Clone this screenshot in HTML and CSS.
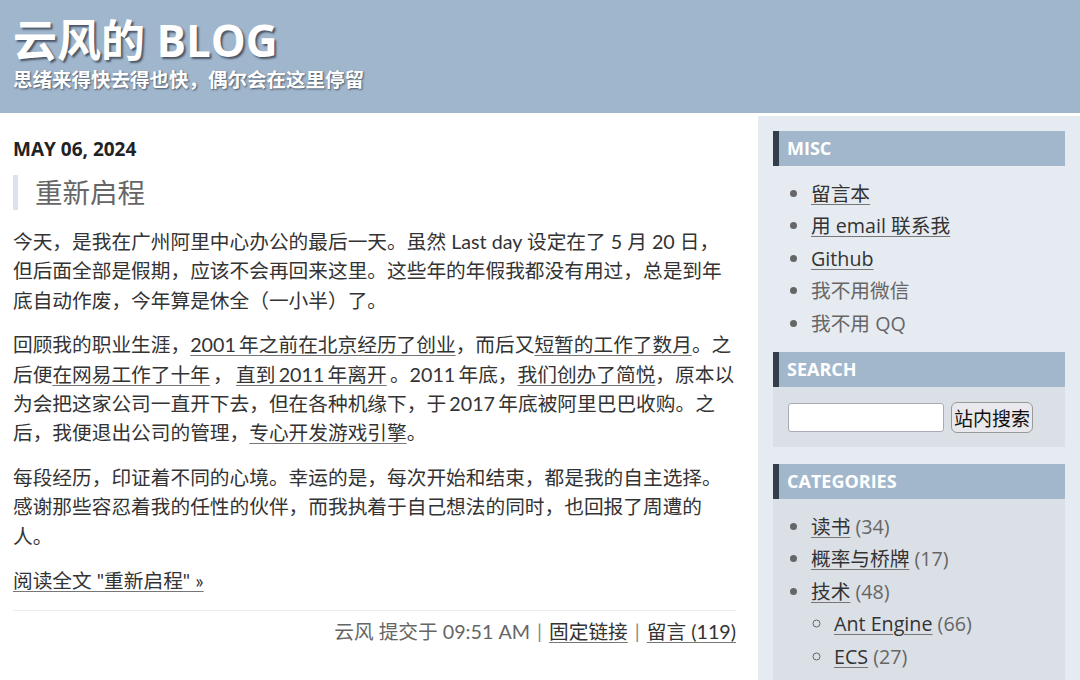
FILE: index.html
```html
<!DOCTYPE html>
<html>
  <head>
    <meta charset="UTF-8">
    <title>云风的 BLOG</title>
    <link rel="stylesheet" href="styles.css">
  </head>
  <body>
    <header class="site-header">
      <h1 class="site-title">云风的 BLOG</h1>
      <p class="site-tagline">思绪来得快去得也快，偶尔会在这里停留</p>
    </header>
    <div class="layout">
      <main class="content">
        <h2 class="date-header">May 06, 2024</h2>
        <h3 class="entry-title">重新启程</h3>
        <div class="entry-body">
          <p>今天，是我在广州阿里中心办公的最后一天。虽然 Last day 设定在了 5 月 20 日，但后面全部是假期，应该不会再回来这里。这些年的年假我都没有用过，总是到年底自动作废，今年算是休全（一小半）了。</p>
          <p class="tight">回顾我的职业生涯，<a href="#">2001 年之前在北京经历了创业</a>，而后又<a href="#">短暂的工作了数月</a>。之后便<a href="#">在网易工作了十年</a> ， <a href="#">直到 2011 年离开</a> 。2011 年底，<a href="#">我们创办了简悦</a>，原本以为会把这家公司一直开下去，但在各种机缘下，于 2017 年底被阿里巴巴收购。之后，我便退出公司的管理，<a href="#">专心开发游戏引擎</a>。</p>
          <p>每段经历，印证着不同的心境。幸运的是，每次开始和结束，都是我的自主选择。感谢那些容忍着我的任性的伙伴，而我执着于自己想法的同时，也回报了周遭的人。</p>
          <p class="read-more"><a href="#">阅读全文 "重新启程" »</a></p>
        </div>
        <p class="entry-footer">云风 提交于 09:51 AM <span class="sep">|</span> <a href="#">固定链接</a> <span class="sep">|</span> <a href="#">留言 (119)</a></p>
      </main>
      <aside class="sidebar">
        <section class="widget widget-plain">
          <h2 class="widget-title">Misc</h2>
          <ul class="widget-list">
            <li><a href="#">留言本</a></li>
            <li><a href="#">用 email 联系我</a></li>
            <li><a href="#">Github</a></li>
            <li>我不用微信</li>
            <li>我不用 QQ</li>
          </ul>
        </section>
        <section class="widget">
          <h2 class="widget-title">Search</h2>
          <form class="search-form">
            <input type="text" class="search-input">
            <button type="submit" class="search-button">站内搜索</button>
          </form>
        </section>
        <section class="widget">
          <h2 class="widget-title">Categories</h2>
          <ul class="widget-list">
            <li><a href="#">读书</a> (34)</li>
            <li><a href="#">概率与桥牌</a> (17)</li>
            <li><a href="#">技术</a> (48)
              <ul>
                <li><a href="#">Ant Engine</a> (66)</li>
                <li><a href="#">ECS</a> (27)</li>
              </ul>
            </li>
          </ul>
        </section>
      </aside>
    </div>
  </body>
</html>
```

FILE: styles.css
```css
body {
  margin: 0;
  font-family: "Open Sans", "Noto Sans CJK SC", sans-serif;
  font-size: 19.7px;
  color: #333;
  background-color: #fff;
}
a {
  color: #333;
  text-decoration: underline;
  text-decoration-color: #777;
  text-underline-offset: 3px;
}
.site-header {
  background-color: #a0b6cd;
  height: 113px;
  padding: 14px 13px 0;
  box-sizing: border-box;
  color: #fff;
}
.site-title {
  margin: 0;
  font-size: 44px;
  line-height: 52px;
  font-weight: bold;
  text-shadow: 2px 2px 2px #4a5666;
}
.site-tagline {
  margin: 0;
  font-size: 19.5px;
  line-height: 28px;
  font-weight: bold;
  text-shadow: 1px 1px 2px #4a5666;
}
.layout {
  display: grid;
  grid-template-columns: 758px 1fr;
  margin-top: 3px;
  height: 564px;
  overflow: hidden;
}
.content {
  padding: 21px 22px 0 13px;
}
.date-header {
  margin: 0;
  font-size: 19px;
  line-height: 24px;
  font-weight: bold;
  text-transform: uppercase;
  color: #222;
}
.entry-title {
  margin: 14px 0 17px;
  border-left: 5px solid #dce2ea;
  padding-left: 17px;
  font-size: 27.5px;
  line-height: 35px;
  font-weight: normal;
  color: #666;
}
.entry-body,
.entry-footer {
  font-family: "Lato", "Noto Sans CJK SC", sans-serif;
}
.entry-body p {
  margin: 0 0 15px;
  line-height: 29.4px;
}
.entry-body .tight {
  word-spacing: -1.8px;
}
.entry-body .read-more {
  margin: 0;
  padding-bottom: 15px;
  border-bottom: 1px solid #e8ecf1;
}
.entry-footer {
  margin: 6px 0 0;
  text-align: right;
  color: #666;
  line-height: 29px;
}
.entry-footer .sep {
  padding: 0 2px;
  color: #888;
}
.sidebar {
  background-color: #e6ebf2;
  padding: 15px 15px 0;
}
.widget {
  background-color: #dbe0e7;
  margin-bottom: 17px;
}
.widget-plain {
  background-color: transparent;
  margin-bottom: 0;
}
.widget-title {
  margin: 0;
  background-color: #a3b7cc;
  border-left: 6px solid #343e4b;
  padding-left: 8px;
  font-size: 18px;
  line-height: 35px;
  font-weight: bold;
  text-transform: uppercase;
  color: #fff;
}
.widget-list {
  margin: 0;
  padding: 12px 0 12px 38px;
  color: #666;
  line-height: 32.4px;
}
.widget-list li::marker {
  color: #666;
}
.widget-list ul {
  margin: 0;
  padding-left: 23px;
  list-style-type: circle;
}
.search-form {
  display: flex;
  align-items: center;
  gap: 7px;
  padding: 15px 15px 14px;
}
.search-input {
  width: 156px;
  height: 29px;
  box-sizing: border-box;
  border: 1px solid #aab;
  border-radius: 3px;
  background-color: #fff;
}
.search-button {
  height: 31px;
  width: 82px;
  padding: 0;
  font-family: "Noto Sans CJK SC", sans-serif;
  font-size: 19px;
  line-height: 29px;
  color: #111;
  background-color: #e9e9ed;
  border: 1px solid #999;
  border-radius: 6px;
}
```
